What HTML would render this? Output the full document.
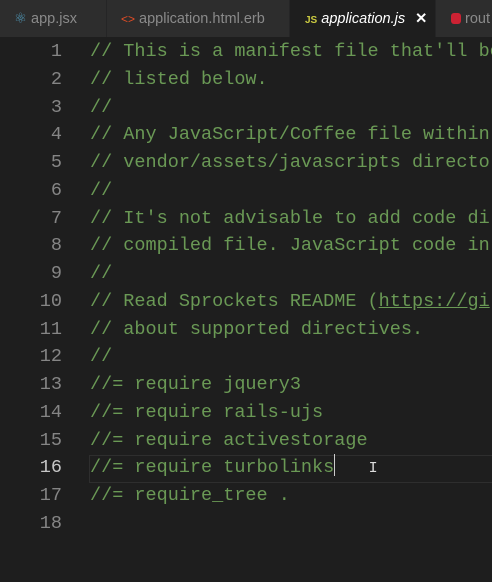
<!DOCTYPE html><html><head><style>
body{margin:0;width:492px;height:582px;background:#1e1e1e;overflow:hidden;font-family:"Liberation Sans",sans-serif}
.tabs{position:absolute;top:0;left:0;width:492px;height:37px;background:#252526}
.tab{position:absolute;top:0;height:37px;background:#2d2d2d;color:#8a8a8a;font-size:14.5px;line-height:38px;box-sizing:border-box;border-right:1px solid #252526}
.act{background:#1e1e1e;color:#fff;font-style:italic}
.ed{position:absolute;top:38px;left:0;font-family:"Liberation Mono",monospace;font-size:18.5px}
.l{height:27.76px;line-height:27.76px;white-space:pre;position:relative}
.n{display:inline-block;width:62px;text-align:right;color:#858585}
.c{position:absolute;left:90px;color:#6a9955}
.u{text-decoration:underline}
.cur .n{color:#c6c6c6}
.hl{position:absolute;left:89px;top:417px;width:420px;height:26px;border:1px solid #2e2e2e}
</style></head><body>
<div class="tabs">
<div class="tab" style="left:0;width:107px;padding-left:14px"><span style="color:#519aba">⚛</span> app.jsx</div>
<div class="tab" style="left:107px;width:183px;padding-left:14px"><span style="color:#e44d26;font-size:12px">&lt;&gt;</span> application.html.erb</div>
<div class="tab act" style="left:290px;width:146px;padding-left:15px"><span style="color:#cbcb41;font-size:10px;font-style:normal;font-weight:bold">JS</span> application.js <span style="font-style:normal;font-weight:bold;margin-left:6px">✕</span></div>
<div class="tab" style="left:436px;width:60px;padding-left:15px"><span style="display:inline-block;width:10px;height:11px;background:#cc2233;border-radius:3px;vertical-align:-1px"></span> rout</div>
</div>
<div class="ed">
<div class="hl"></div>
<div class="l"><span class="n">1</span><span class="c">// This is a manifest file that'll be</span></div>
<div class="l"><span class="n">2</span><span class="c">// listed below.</span></div>
<div class="l"><span class="n">3</span><span class="c">//</span></div>
<div class="l"><span class="n">4</span><span class="c">// Any JavaScript/Coffee file within</span></div>
<div class="l"><span class="n">5</span><span class="c">// vendor/assets/javascripts directo</span></div>
<div class="l"><span class="n">6</span><span class="c">//</span></div>
<div class="l"><span class="n">7</span><span class="c">// It's not advisable to add code di</span></div>
<div class="l"><span class="n">8</span><span class="c">// compiled file. JavaScript code in</span></div>
<div class="l"><span class="n">9</span><span class="c">//</span></div>
<div class="l"><span class="n">10</span><span class="c">// Read Sprockets README (<span class="u">https://gi</span></span></div>
<div class="l"><span class="n">11</span><span class="c">// about supported directives.</span></div>
<div class="l"><span class="n">12</span><span class="c">//</span></div>
<div class="l"><span class="n">13</span><span class="c">//= require jquery3</span></div>
<div class="l"><span class="n">14</span><span class="c">//= require rails-ujs</span></div>
<div class="l"><span class="n">15</span><span class="c">//= require activestorage</span></div>
<div class="l cur"><span class="n">16</span><span class="c">//= require turbolinks<span style="display:inline-block;width:1px;height:22px;background:#ccc;vertical-align:-4px"></span>   <span style="color:#ddd;font-size:15px">I</span></span></div>
<div class="l"><span class="n">17</span><span class="c">//= require_tree .</span></div>
<div class="l"><span class="n">18</span></div>
</div>
</body></html>
